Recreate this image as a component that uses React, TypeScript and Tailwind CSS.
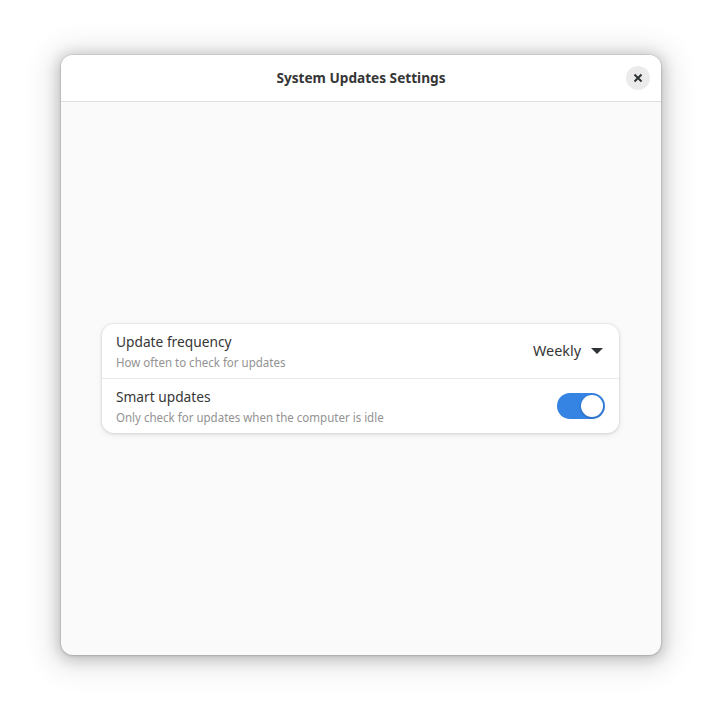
function Row({ title, detail, children }: { title: React.ReactNode; detail: React.ReactNode; children: React.ReactNode }) {
  return (
    <div className="flex h-[54px] items-center justify-between px-[14px]">
      <div className="pt-px">
        <p className="h-[22px] origin-left scale-x-[0.915] text-[15px] leading-5 whitespace-nowrap">{title}</p>
        <p className="h-5 origin-left scale-x-[0.921] text-[12.5px] leading-5 whitespace-nowrap text-[#929292]">{detail}</p>
      </div>
      {children}
    </div>
  );
}

export default function App() {
  return (
    <main className="flex h-[722px] w-[722px] overflow-hidden bg-white pt-[55px] pl-[61px] font-['Noto_Sans',sans-serif] text-[#363636]">
      <section className="flex h-[600px] w-[600px] flex-col rounded-xl bg-[#fafafa] shadow-[0_0_0_1px_rgba(0,0,0,0.05),0_1px_3px_rgba(0,0,0,0.14),0_2px_14px_3px_rgba(0,0,0,0.18),0_3px_28px_12px_rgba(0,0,0,0.09)]">
        <header className="grid h-[47px] shrink-0 grid-cols-[1fr_auto_1fr] items-center rounded-t-xl border-b border-[#dedede] bg-white px-[11px]">
          <span />
          <h1 className="scale-x-[0.909] pb-0.5 pl-px text-[15px] leading-5 font-bold whitespace-nowrap">System Updates Settings</h1>
          <button aria-label="Close" className="flex size-6 items-center justify-center justify-self-end rounded-full bg-[#ebebeb]">
            <svg width="10" height="10" viewBox="0 0 10 10" fill="none" stroke="#2e3436" strokeWidth="2" strokeLinecap="square"><path d="m2.2 2.2 5.6 5.6m0-5.6-5.6 5.6" /></svg>
          </button>
        </header>
        <div className="flex flex-1 items-center pl-[41px]">
          <div className="h-[109px] w-[517px] rounded-xl bg-white shadow-[0_0_0_1px_rgba(0,0,0,0.03),0_1px_3px_1px_rgba(0,0,0,0.07),0_2px_6px_2px_rgba(0,0,0,0.03)]">
            <div className="h-[55px] border-b border-[#ebebeb]">
              <Row title="Update frequency" detail="How often to check for updates">
                <button className="flex items-center gap-2.5 pr-0.5 text-[15px] leading-5">
                  <span className="origin-right scale-x-[0.96] pb-0.5">Weekly</span>
                  <svg width="12" height="6" viewBox="0 0 12 6"><path d="M0 0h12L6 6Z" fill="#2e3436" /></svg>
                </button>
              </Row>
            </div>
            <Row title="Smart updates" detail="Only check for updates when the computer is idle">
              <button aria-label="Smart updates" className="flex h-[26px] w-12 items-center justify-end rounded-full bg-[#3584e4] p-0.5">
                <span className="size-[22px] rounded-full bg-white shadow-[0_1px_3px_rgba(0,0,0,0.25)]" />
              </button>
            </Row>
          </div>
        </div>
      </section>
    </main>
  );
}
